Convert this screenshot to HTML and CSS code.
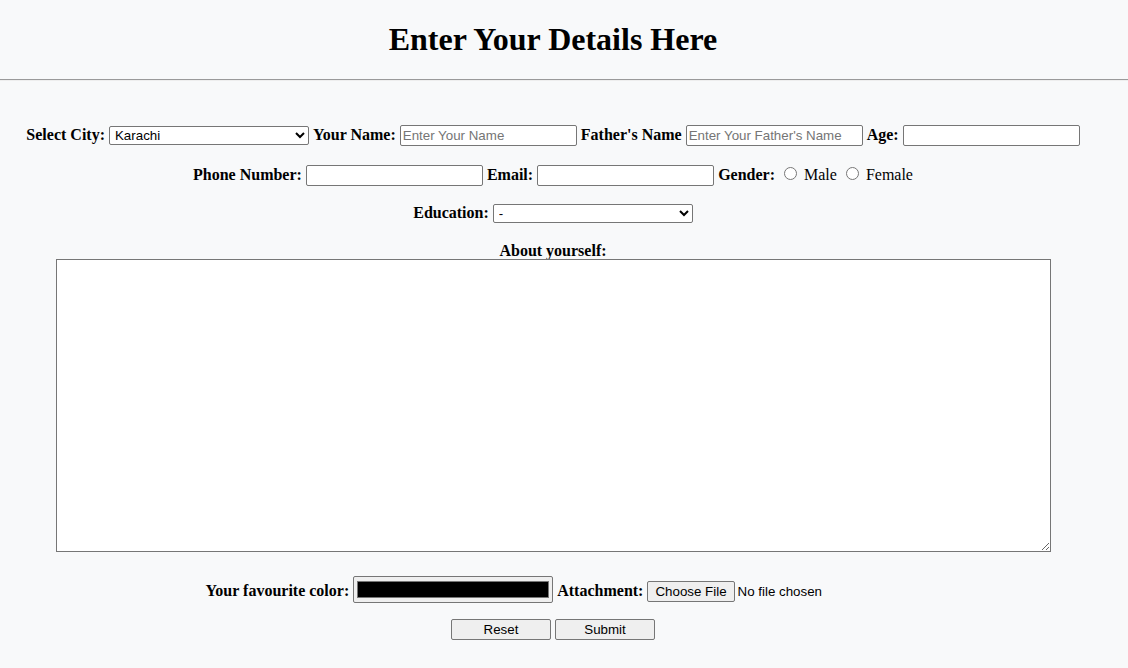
FILE: index.html
```html
<!DOCTYPE html>
<html>
<head>
<meta charset="utf-8">
<title>Form</title>
<link rel="stylesheet" href="styles.css">
</head>
<body>
<header class="page-header">
  <h1 class="title">Enter Your Details Here</h1>
</header>
<hr class="divider">
<form class="details-form">
  <div class="row row-first">
    <label class="lbl">Select City:</label>
    <select class="ctl-select">
      <option>Karachi</option>
      <option>Lahore</option>
      <option>Islamabad</option>
    </select>
    <label class="lbl">Your Name:</label>
    <input class="ctl-text" type="text" placeholder="Enter Your Name">
    <label class="lbl">Father's Name</label>
    <input class="ctl-text" type="text" placeholder="Enter Your Father's Name">
    <label class="lbl">Age:</label>
    <input class="ctl-text" type="text">
  </div>
  <div class="row row-second">
    <label class="lbl">Phone Number:</label>
    <input class="ctl-text" type="text">
    <label class="lbl">Email:</label>
    <input class="ctl-text" type="text">
    <label class="lbl">Gender:</label>
    <input class="ctl-radio" type="radio" name="g"> <span class="opt">Male</span>
    <input class="ctl-radio" type="radio" name="g"> <span class="opt">Female</span>
  </div>
  <div class="row row-third">
    <label class="lbl">Education:</label>
    <select class="ctl-select">
      <option>-</option>
      <option>Matric</option>
      <option>Intermediate</option>
      <option>Graduate</option>
    </select>
  </div>
  <div class="row row-about">
    <label class="lbl">About yourself:</label>
  </div>
  <div class="row row-area">
    <textarea class="ctl-area"></textarea>
  </div>
  <div class="row row-color">
    <label class="lbl">Your favourite color:</label>
    <span class="ctl-color"><span class="swatch"></span></span>
    <label class="lbl">Attachment:</label>
    <span class="ctl-file"><span class="file-btn">Choose File</span><span class="file-txt">No file chosen</span></span>
  </div>
  <div class="row row-buttons">
    <button class="btn" type="reset">Reset</button>
    <button class="btn" type="button">Submit</button>
  </div>
</form>
</body>
</html>
```
FILE: styles.css
```css
html, body {
  margin: 0;
  padding: 0;
  background: #f8f9fa;
}
body {
  font-family: "Liberation Serif", "Times New Roman", serif;
  font-size: 16px;
  color: #000;
}
.page-header {
  text-align: center;
  padding: 21px 22px 21px 0;
}
.title {
  margin: 0;
  font-size: 32px;
  line-height: 37px;
  font-weight: bold;
}
.divider {
  margin: 0;
  border: 0;
  border-top: 1px solid #9a9a9a;
  border-bottom: 1px solid #eeeeee;
  height: 0;
}
.details-form {
  padding-right: 22px;
  text-align: center;
}
.row {
  line-height: 22px;
}
.row-first { margin-top: 43px; }
.row-second { margin-top: 18px; }
.row-third { margin-top: 16px; }
.row-about { margin-top: 19px; line-height: 16px; }
.row-area { line-height: 0; }
.row-color { margin-top: 24px; line-height: 28px; }
.row-buttons { margin-top: 13px; }
.lbl {
  font-weight: bold;
}
.opt {
  font-weight: normal;
}
.ctl-text {
  box-sizing: border-box;
  width: 177px;
  height: 21px;
  padding: 1px 2px;
  border: 1px solid #767676;
  border-radius: 2px;
  background: #fff;
  font-family: "Liberation Sans", Arial, sans-serif;
  font-size: 13.33px;
  vertical-align: baseline;
}
.ctl-text::placeholder {
  color: #757575;
}
.ctl-select {
  box-sizing: border-box;
  width: 200px;
  height: 19px;
  padding: 0 0 0 1px;
  border: 1px solid #767676;
  border-radius: 2px;
  background: #fff;
  font-family: "Liberation Sans", Arial, sans-serif;
  font-size: 13.33px;
  color: #000;
}
.ctl-radio {
  margin: 3px 3px 0 5px;
  width: 13px;
  height: 13px;
}
.ctl-area {
  box-sizing: border-box;
  width: 995px;
  height: 293px;
  border: 1px solid #767676;
  border-radius: 0;
  background: #fff;
  padding: 2px;
  vertical-align: top;
  margin: 0;
}
.ctl-color {
  display: inline-block;
  box-sizing: border-box;
  width: 200px;
  height: 27px;
  border: 1px solid #767676;
  border-radius: 2px;
  background: #efefef;
  padding: 4px 3px;
  vertical-align: -7px;
  line-height: 0;
}
.swatch {
  display: block;
  height: 100%;
  background: #000;
  border: 1px solid #777;
  box-sizing: border-box;
}
.ctl-file {
  display: inline-block;
  width: 253px;
  text-align: left;
  font-family: "Liberation Sans", Arial, sans-serif;
  font-size: 13.33px;
  line-height: 21px;
}
.file-btn {
  display: inline-block;
  box-sizing: border-box;
  height: 21px;
  padding: 0 7px;
  border: 1px solid #767676;
  border-radius: 2px;
  background: #efefef;
  line-height: 19px;
  margin-right: 3px;
}
.btn {
  box-sizing: border-box;
  width: 100px;
  height: 21px;
  border: 1px solid #767676;
  border-radius: 2px;
  background: #efefef;
  font-family: "Liberation Sans", Arial, sans-serif;
  font-size: 13.33px;
  color: #000;
  padding: 0;
}
```
